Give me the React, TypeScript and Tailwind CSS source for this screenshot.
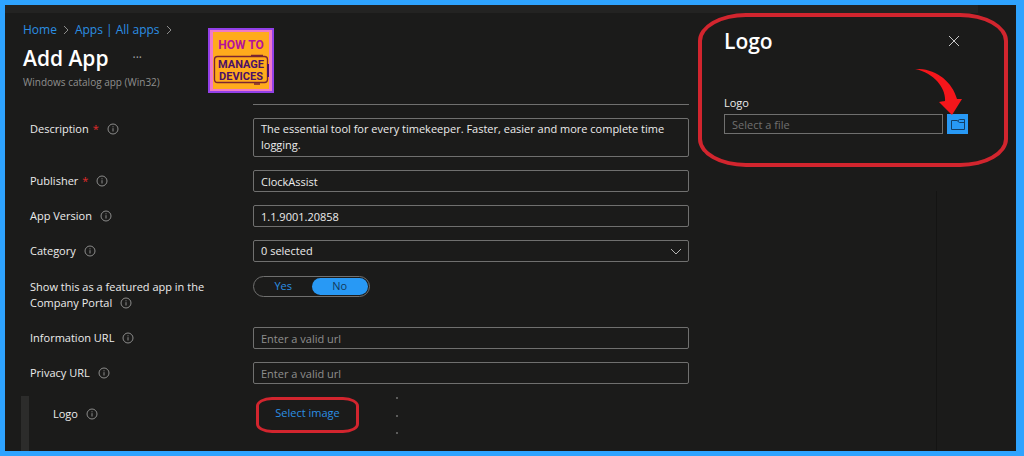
import { useState } from "react";
import type { ReactNode } from "react";

const fieldClass =
  "block h-[22px] w-full rounded-[2px] border border-[#70706f] bg-transparent px-[7px] text-[11px] text-[#ececec] outline-none placeholder:text-[#8f8f8e] focus:border-[#2899f5]";

function InfoIcon() {
  return (
    <svg
      viewBox="0 0 12 12"
      className="ml-2 inline-block size-3 shrink-0 align-[-2px] text-[#8c8c8b]"
      fill="none"
      stroke="currentColor"
      aria-hidden="true"
    >
      <circle cx="6" cy="6" r="5" />
      <path d="M6 5.2v3.3M6 3.3v1" />
    </svg>
  );
}

function Chevron({ className }: { className: string }) {
  return (
    <svg viewBox="0 0 6 10" className={className} fill="none" stroke="currentColor" aria-hidden="true">
      <path d="M1 1l4 4-4 4" />
    </svg>
  );
}

function BrandLogo() {
  return (
    <svg viewBox="0 0 66 65" className="h-[65px] w-[66px]" role="img" aria-label="How to manage devices">
      <rect width="66" height="65" fill="#9340e8" />
      <rect x="2" y="2" width="62" height="61" fill="#ef79c9" />
      <rect x="5" y="4" width="56" height="57" fill="#ffab1c" />
      <g className="font-['Roboto','Liberation_Sans',sans-serif] font-bold" textAnchor="middle">
        <text x="33" y="21" fontSize="12" fill="#b5129c">
          HOW TO
        </text>
        <text x="33" y="40" fontSize="11" fill="#4a1068">
          MANAGE
        </text>
        <text x="33" y="52" fontSize="11" fill="#4a1068">
          DEVICES
        </text>
      </g>
      <rect x="6.5" y="28.5" width="53" height="26" rx="3" fill="none" stroke="#7a2430" strokeWidth="1.3" />
      <path d="M43 27.5h12M46 56h6" stroke="#7a2430" strokeWidth="1.5" />
      <path d="M60 36v13" stroke="#4a1068" strokeWidth="2" />
    </svg>
  );
}

function FormRow({
  id,
  label,
  required,
  className = "items-center",
  children,
}: {
  id: string;
  label: string;
  required?: boolean;
  className?: string;
  children: ReactNode;
}) {
  return (
    <div className={`flex ${className}`}>
      <div className="w-[223px] shrink-0 pr-10 leading-4">
        <label htmlFor={id}>
          {label}
          {required && <span className="ml-1 text-[#e02b2b]">*</span>}
        </label>
        <InfoIcon />
      </div>
      <div className="min-w-0 flex-1">{children}</div>
    </div>
  );
}

function FeaturedToggle() {
  const [featured, setFeatured] = useState(false);
  const base = "flex h-[17px] cursor-pointer items-center justify-center rounded-full";

  return (
    <div
      role="radiogroup"
      aria-label="Show this as a featured app in the Company Portal"
      className="grid h-[21px] w-[117px] grid-cols-2 items-center rounded-full border border-[#70706f] px-px"
    >
      <label className={`${base} ${featured ? "bg-[#2899f5] text-[#123a5c]" : "text-[#2b8fe3]"}`}>
        <input
          id="featured"
          type="radio"
          name="featured"
          className="sr-only"
          checked={featured}
          onChange={() => setFeatured(true)}
        />
        Yes
      </label>
      <label className={`${base} ${featured ? "text-[#2b8fe3]" : "bg-[#2899f5] text-[#123a5c]"}`}>
        <input
          type="radio"
          name="featured"
          className="sr-only"
          checked={!featured}
          onChange={() => setFeatured(false)}
        />
        No
      </label>
    </div>
  );
}

function LogoPanel() {
  return (
    <aside className="relative h-[154px] w-[310px] rounded-[48px/28px] border-4 border-[#d2252e] pt-2.5 pr-9 pl-[22px]">
      <div className="flex items-center justify-between">
        <h2 className="text-[21px] leading-7 font-semibold text-white">Logo</h2>
        <button type="button" aria-label="Close" className="mr-2 text-[#c8c8c8]">
          <svg viewBox="0 0 12 12" className="size-3" fill="none" stroke="currentColor" aria-hidden="true">
            <path d="M1 1l10 10M11 1L1 11" />
          </svg>
        </button>
      </div>
      <label htmlFor="logo-file" className="mt-10 block leading-4">
        Logo
      </label>
      <div className="mt-[3px] flex gap-1">
        <input
          id="logo-file"
          type="text"
          placeholder="Select a file"
          className="h-[20px] min-w-0 flex-1 border border-[#70706f] bg-transparent px-[7px] text-[11px] outline-none placeholder:text-[#70706f]"
        />
        <button
          type="button"
          aria-label="Browse"
          className="flex h-[20px] w-[21px] items-center justify-center bg-[#2899f5] text-[#123f66]"
        >
          <svg viewBox="0 0 14 11" className="h-[11px] w-3.5" fill="none" stroke="currentColor" aria-hidden="true">
            <path d="M6.5 1.5H.5v9h13V.5h-5l-2 1.5 2 1.5h5" />
          </svg>
        </button>
      </div>
      <svg viewBox="0 0 48 46" className="absolute top-[52px] right-[41px] h-[46px] w-12" aria-hidden="true">
        <path d="M0 0C20-1 37 12 42 30l5 0-10 16L24 33l6-1C31 20 20 4 0 0z" fill="#f5161b" />
      </svg>
    </aside>
  );
}

export default function App() {
  return (
    <div className="flex min-h-screen flex-col border-[5px] border-r-8 border-[#2ea3ff] bg-[#1b1b1a] font-['Open_Sans','Noto_Sans',sans-serif] text-[11px] font-medium text-[#ececec]">
      <div className="mr-[38px] h-2 bg-[#232322]" />
      <div className="flex flex-1">
        <main className="flex min-w-0 flex-1 flex-col">
          <header className="flex pt-2 pl-[18px]">
            <div className="w-[185px] pt-px">
              <nav aria-label="Breadcrumb" className="flex items-center text-xs text-[#2b8fe3]">
                <a href="#home">Home</a>
                <Chevron className="mx-1.5 h-2.5 w-1.5 text-[#8c8c8b]" />
                <a href="#apps" className="whitespace-nowrap">
                  Apps | All apps
                </a>
                <Chevron className="mx-1.5 h-2.5 w-1.5 text-[#8c8c8b]" />
              </nav>
              <div className="mt-1 flex items-center">
                <h1 className="text-[21px] leading-8 font-semibold text-white">Add App</h1>
                <button type="button" aria-label="More" className="ml-6 text-xs text-[#a5a5a4]">
                  ···
                </button>
              </div>
              <p className="text-[10px] leading-4 whitespace-nowrap text-[#8f8f8e]">Windows catalog app (Win32)</p>
            </div>
            <div className="pt-[7px]">
              <BrandLogo />
            </div>
          </header>

          <form className="flex flex-1 flex-col" onSubmit={(e) => e.preventDefault()}>
            <div className="flex flex-col gap-[13px] pt-[11px] pr-[9px] pl-[25px]">
              <div className="ml-[223px] border-t border-[#70706f]" />
              <FormRow id="description" label="Description" required className="items-start [&>div:first-child]:pt-[3px]">
                <textarea
                  id="description"
                  className="block h-[39px] w-full resize-none overflow-hidden rounded-[2px] border border-[#70706f] bg-transparent px-[7px] py-[2px] text-[11px] leading-4 outline-none"
                  defaultValue="The essential tool for every timekeeper. Faster, easier and more complete time logging."
                />
              </FormRow>
              <FormRow id="publisher" label="Publisher" required>
                <input id="publisher" className={fieldClass} defaultValue="ClockAssist" />
              </FormRow>
              <FormRow id="version" label="App Version">
                <input id="version" className={fieldClass} defaultValue="1.1.9001.20858" />
              </FormRow>
              <FormRow id="category" label="Category">
                <div className="relative">
                  <select id="category" className={`${fieldClass} appearance-none`}>
                    <option>0 selected</option>
                  </select>
                  <svg
                    viewBox="0 0 12 7"
                    className="pointer-events-none absolute top-2 right-[7px] h-[7px] w-3 text-[#b5b5b4]"
                    fill="none"
                    stroke="currentColor"
                    aria-hidden="true"
                  >
                    <path d="M1 1l5 5 5-5" />
                  </svg>
                </div>
              </FormRow>
              <FormRow
                id="featured"
                label="Show this as a featured app in the Company Portal"
                className="h-[39px] items-start pt-px [&>div:first-child]:pt-[3px]"
              >
                <FeaturedToggle />
              </FormRow>
              <FormRow id="info-url" label="Information URL">
                <input id="info-url" type="url" className={fieldClass} placeholder="Enter a valid url" />
              </FormRow>
              <FormRow id="privacy-url" label="Privacy URL">
                <input id="privacy-url" type="url" className={fieldClass} placeholder="Enter a valid url" />
              </FormRow>
            </div>

            <div className="mt-3 ml-4 flex flex-1 border-l-8 border-[#2c2c2b] pl-6">
              <div className="w-[203px] pt-2.5">
                <label htmlFor="select-image">Logo</label>
                <InfoIcon />
              </div>
              <button
                id="select-image"
                type="button"
                className="mt-px h-9 w-[103px] rounded-[16px/9px] border-[3px] border-[#d2252e] pb-1 text-[#2b8fe3]"
              >
                Select image
              </button>
              <div className="ml-[37px] flex h-[38px] flex-col justify-between pt-px" aria-hidden="true">
                <span className="size-0.5 bg-[#5c5c5b]" />
                <span className="size-0.5 bg-[#5c5c5b]" />
                <span className="size-0.5 bg-[#5c5c5b]" />
              </div>
            </div>
          </form>
        </main>

        <div className="mr-2 flex w-[310px] shrink-0 flex-col">
          <LogoPanel />
          <div className="mt-6 mr-[71px] flex-1 border-r border-[#141413]" />
        </div>
      </div>
    </div>
  );
}
